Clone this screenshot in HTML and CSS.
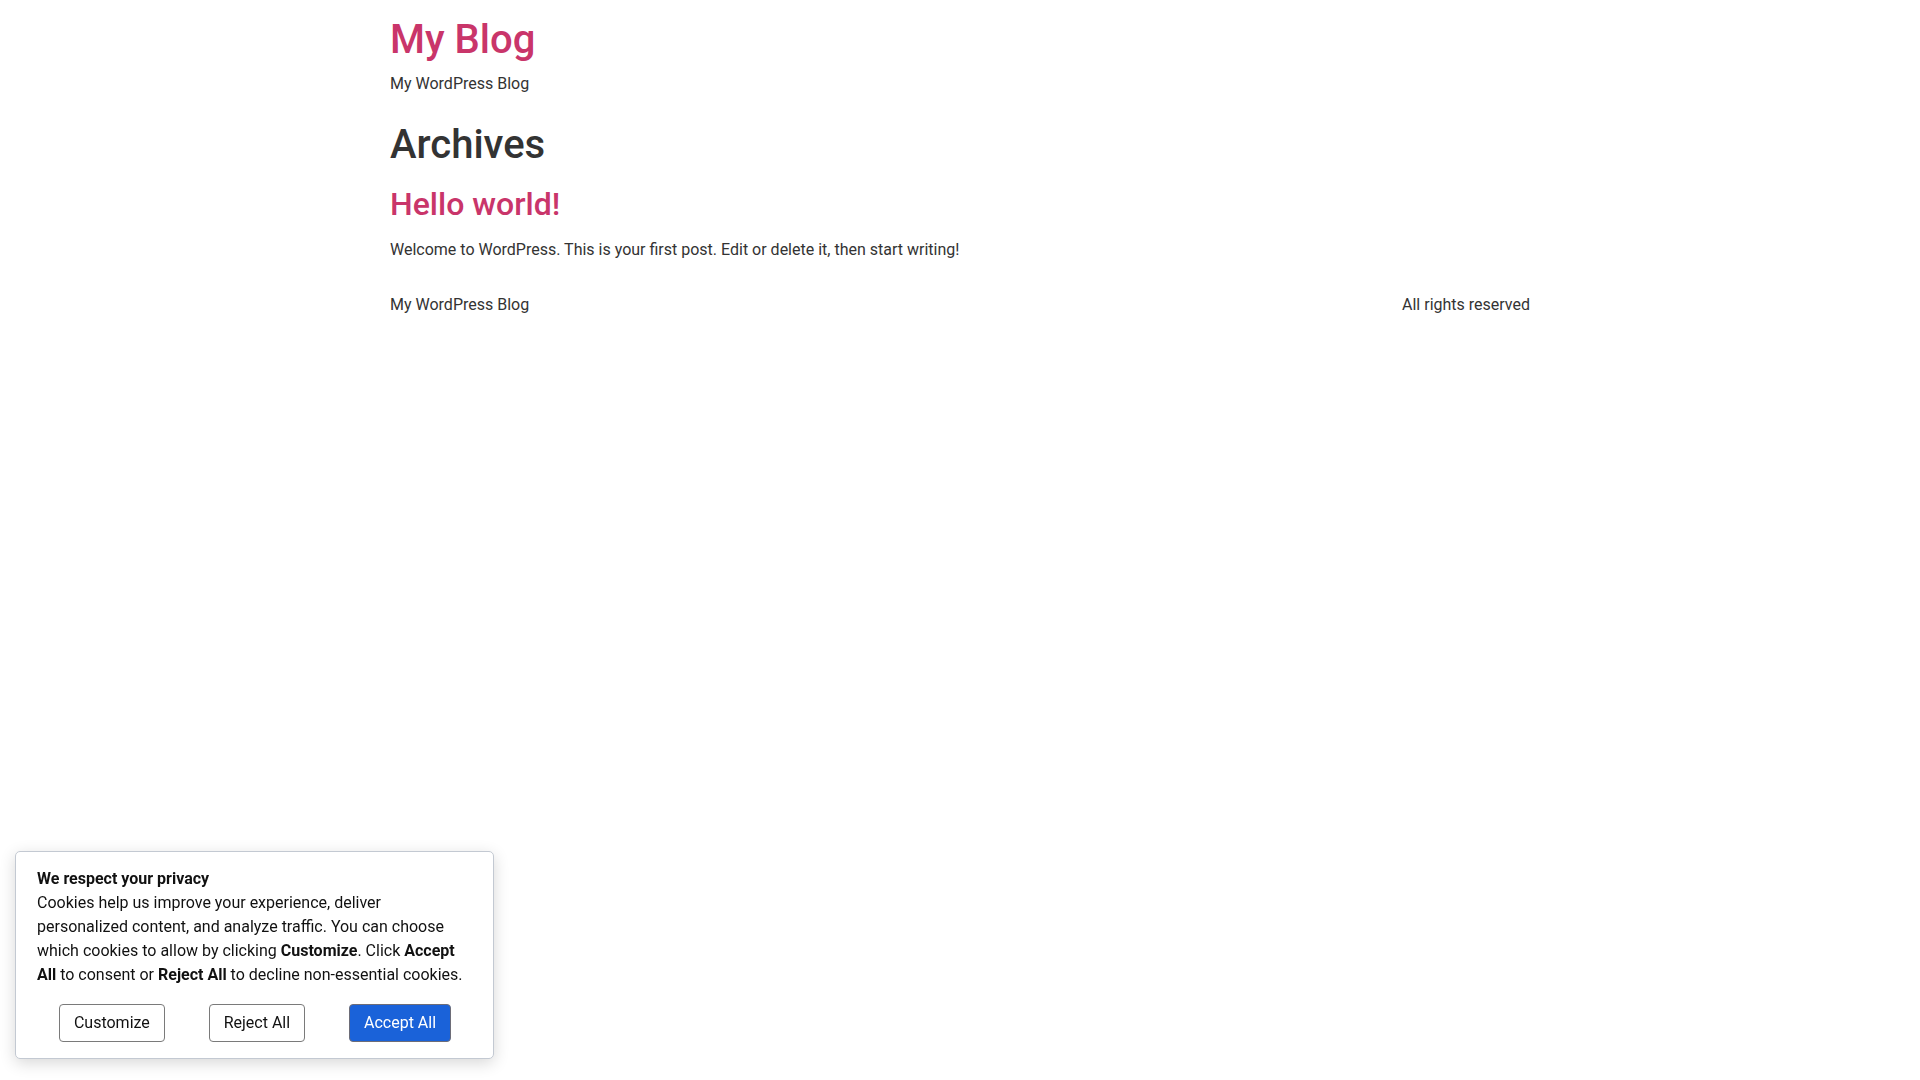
FILE: index.html
```html
<!DOCTYPE html>
<html lang="en">
<head>
<meta charset="utf-8">
<title>Archives – My Blog</title>
<link rel="stylesheet" href="styles.css">
</head>
<body>
<div class="site">
  <header class="site-header">
    <h1 class="site-title"><a href="#">My Blog</a></h1>
    <p class="site-tagline">My WordPress Blog</p>
  </header>
  <main class="site-main">
    <h1 class="page-title">Archives</h1>
    <article class="post">
      <h2 class="post-title"><a href="#">Hello world!</a></h2>
      <p class="post-excerpt">Welcome to WordPress. This is your first post. Edit or delete it, then start writing!</p>
    </article>
  </main>
  <footer class="site-footer">
    <span>My WordPress Blog</span>
    <span>All rights reserved</span>
  </footer>
</div>

<div class="cookie-banner" role="dialog" aria-label="Cookie consent">
  <p class="cookie-title">We respect your privacy</p>
  <p class="cookie-text">Cookies help us improve your experience, deliver personalized content, and analyze traffic. You can choose which cookies to allow by clicking <strong>Customize</strong>. Click <strong>Accept All</strong> to consent or <strong>Reject All</strong> to decline non-essential cookies.</p>
  <div class="cookie-actions">
    <button class="btn">Customize</button>
    <button class="btn">Reject All</button>
    <button class="btn btn-primary">Accept All</button>
  </div>
</div>
</body>
</html>
```

FILE: styles.css
```css
* {
  box-sizing: border-box;
}

html, body {
  margin: 0;
  padding: 0;
  background: #ffffff;
}

body {
  font-family: Roboto, "Liberation Sans", Arial, sans-serif;
  font-size: 16px;
  line-height: 24px;
  color: #333333;
}

a {
  color: #c9356a;
  text-decoration: none;
}

.site {
  max-width: 1140px;
  margin: 0 auto;
  padding-top: 15px;
}

.site-title {
  margin: 0;
  font-size: 40px;
  line-height: 50px;
  font-weight: 500;
}

.site-tagline {
  margin: 7px 0 0;
  font-size: 16px;
  line-height: 24px;
}

.site-main {
  padding-top: 25px;
}

.page-title {
  margin: 0;
  font-size: 40px;
  line-height: 48px;
  font-weight: 500;
  color: #333333;
}

.post {
  padding-top: 16px;
}

.post-title {
  margin: 0;
  font-size: 32px;
  line-height: 38px;
  font-weight: 500;
}

.post-excerpt {
  margin: 15px 0 0;
}

.site-footer {
  display: flex;
  justify-content: space-between;
  margin-top: 31px;
}

.cookie-banner {
  position: fixed;
  left: 15px;
  bottom: 21px;
  width: 479px;
  padding: 15px 20px 16px 21px;
  background: #ffffff;
  border: 1px solid #c3c9d2;
  border-radius: 5px;
  box-shadow: 0 4px 16px rgba(0, 0, 0, 0.16);
  color: #111111;
}

.cookie-title {
  margin: 0;
  font-weight: 700;
}

.cookie-text {
  margin: 0;
}

.cookie-text strong {
  font-weight: 700;
}

.cookie-actions {
  display: flex;
  justify-content: space-around;
  margin-top: 17px;
}

.btn {
  font-family: Roboto, "Liberation Sans", Arial, sans-serif;
  font-size: 16px;
  line-height: 20px;
  padding: 8px 14px;
  background: #ffffff;
  color: #111111;
  border: 1px solid #7a7a7a;
  border-radius: 4px;
  cursor: pointer;
}

.btn-primary {
  background: #1a62d9;
  color: #ffffff;
  border-color: #6d6d78;
}
```
